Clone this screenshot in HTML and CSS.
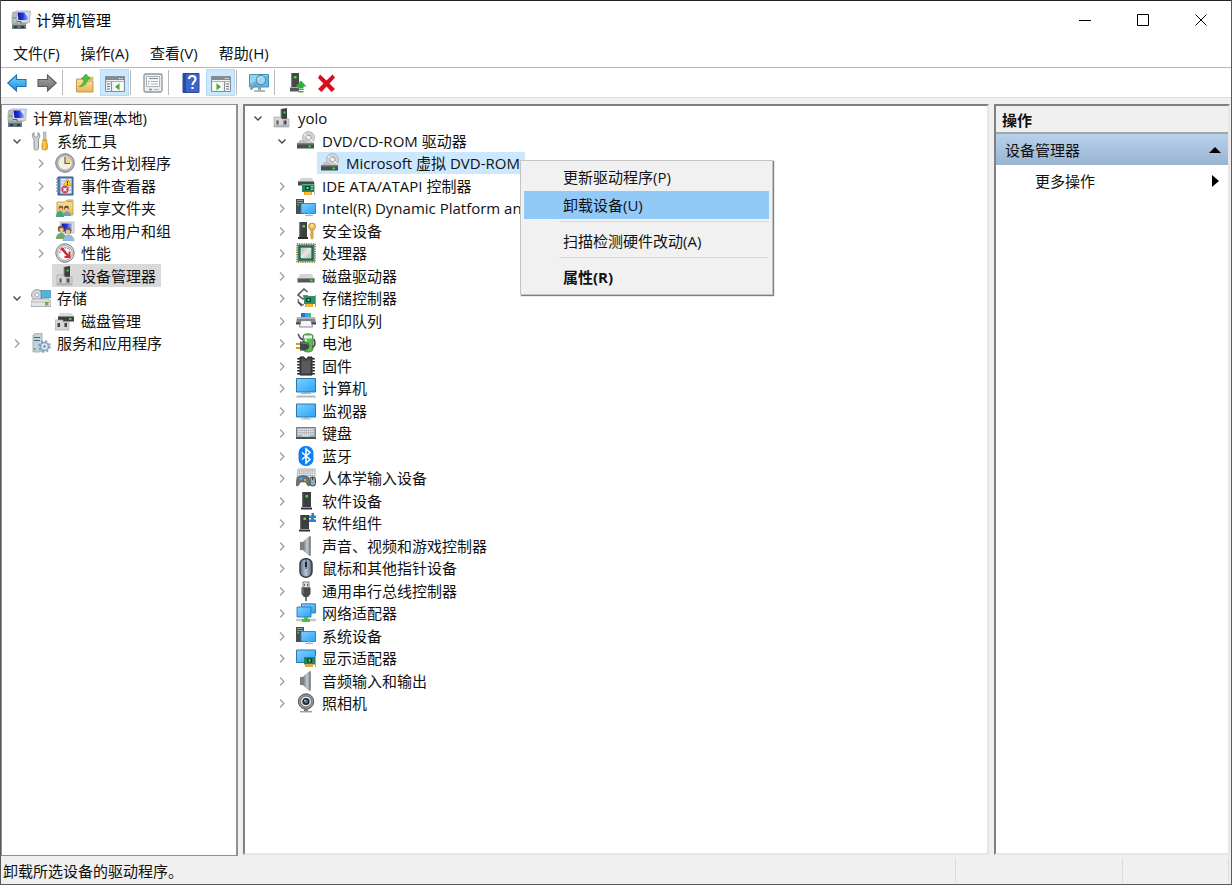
FILE: index.html
```html
<!DOCTYPE html>
<html lang="zh-CN">
<head>
  <meta charset="UTF-8">
  <meta name="viewport" content="width=device-width, initial-scale=1.0">
  <title>计算机管理</title>
  <link rel="stylesheet" href="styles.css">
</head>
<body>
  <!-- Icon sprite -->
  <svg class="sprite" aria-hidden="true">
    <defs>
      <linearGradient id="g-screen" x1="0" y1="0" x2="1" y2="1"><stop offset="0" stop-color="#7fd0ff"/><stop offset="1" stop-color="#2ba4f8"/></linearGradient>
      <linearGradient id="g-blue" x1="0" y1="0" x2="1" y2="0"><stop offset="0" stop-color="#0a16a8"/><stop offset=".5" stop-color="#2138e0"/><stop offset="1" stop-color="#a9c4ff"/></linearGradient>
      <linearGradient id="g-metal" x1="0" y1="0" x2="1" y2="1"><stop offset="0" stop-color="#b4b4b4"/><stop offset=".5" stop-color="#e8e8e8"/><stop offset="1" stop-color="#b2b2b2"/></linearGradient>
      <linearGradient id="g-back" x1="0" y1="0" x2="0" y2="1"><stop offset="0" stop-color="#7cd0fa"/><stop offset="1" stop-color="#1590e0"/></linearGradient>
      <linearGradient id="g-fwd" x1="0" y1="0" x2="0" y2="1"><stop offset="0" stop-color="#a5a5a5"/><stop offset="1" stop-color="#6c6c6c"/></linearGradient>
      <linearGradient id="g-folder" x1="0" y1="0" x2="0" y2="1"><stop offset="0" stop-color="#fbe3a0"/><stop offset="1" stop-color="#e5b755"/></linearGradient>
      <linearGradient id="g-speaker" x1="0" y1="0" x2="1" y2="0"><stop offset="0" stop-color="#6d737a"/><stop offset=".6" stop-color="#c9ced3"/><stop offset="1" stop-color="#777d84"/></linearGradient>
      <linearGradient id="g-mouse" x1="0" y1="0" x2="1" y2="0"><stop offset="0" stop-color="#5d6f85"/><stop offset=".5" stop-color="#b8c7d8"/><stop offset="1" stop-color="#53647a"/></linearGradient>
    </defs>

    <symbol id="open" viewBox="0 0 20 20"><path d="M6.500 8.500l3.500 3.500 3.500-3.500" fill="none" stroke="#484848" stroke-width="1.400"/></symbol>
    <symbol id="closed" viewBox="0 0 20 20"><path d="M8 6.500l4 4-4 4" fill="none" stroke="#a0a0a0" stroke-width="1.300"/></symbol>

    <symbol id="computer-mgmt" viewBox="0 0 20 20">
      <path d="M2 2h4v11H1V6z" fill="#b9bec4" stroke="#8b9096" stroke-width=".6"/><path d="M2 8h3" stroke="#3fae49" stroke-width="1.200"/>
      <path d="M5 1h14.500l-1 11.500H6z" fill="#d8dade" stroke="#a4a8ae" stroke-width=".7"/><path d="M6.500 2.500H17.500l-.5 7.500H7.500z" fill="url(#g-blue)"/><path d="M13 2.500h4v4.500z" fill="#dbe7ff"/>
      <path d="M11 12h5l1 2H10z" fill="#c0c3c8"/>
      <path d="M1 13.500h14v5.500H1z" fill="#68747c"/><path d="M1 13.500h14v1.500H1z" fill="#98a2a8"/><path d="M3 16h3v2H3zM10 16h3v2h-3z" fill="#303a40"/><path d="M6 11.500h4v2" fill="none" stroke="#5a646a"/>
    </symbol>
    <symbol id="tools" viewBox="0 0 20 20">
      <path d="M3 1.500v3.500l2 1.500 2-1.500V1.500c2 1 2.500 4.500.5 6.500v9.500c0 2-4.500 2-4.500 0V8C.5 6 1 2.500 3 1.500z" fill="#d0d2d4" stroke="#7c7f82" stroke-width=".8"/>
      <path d="M12.500 1h2.500v8h-2.500z" fill="#c4c7ca" stroke="#85888b" stroke-width=".5"/><path d="M11.500 9h4.500l-.5 2 1 2v4.500c0 2-5.500 2-5.500 0V13l1-2z" fill="#f4b32c" stroke="#ba7d0c" stroke-width=".6"/><path d="M13 10v8" stroke="#ffe08a"/>
    </symbol>
    <symbol id="clock" viewBox="0 0 20 20">
      <circle cx="10" cy="10" r="9.300" fill="#b7bcc2" stroke="#747b82" stroke-width="1"/><circle cx="10" cy="10" r="7.200" fill="#f5efe0" stroke="#8f959b" stroke-width=".7"/>
      <path d="M10 10V3a7 7 0 0 1 7 7z" fill="#efd193"/><path d="M10 4v6.500h5" fill="none" stroke="#52606c" stroke-width="1.200"/>
    </symbol>
    <symbol id="events" viewBox="0 0 20 20">
      <path d="M3 1h15v18H3z" fill="#557bb6" stroke="#37568a"/><path d="M5.500 2.500h11v15h-11z" fill="#e4ebf5"/><path d="M6 5h10M6 8h10M6 11h10M6 14h10" stroke="#8fa6ca" stroke-width=".7"/>
      <path d="M1 3h4M1 6h4M1 9h4M1 12h4M1 15h4" stroke="#67809f" stroke-width="1"/>
      <path d="M12.500 2.500l4 7h-8z" fill="#fbd429" stroke="#b78d08" stroke-width=".6"/><path d="M12.500 5v2.500M12.500 8v1" stroke="#333"/>
      <circle cx="10" cy="13.500" r="3.700" fill="#dc4050"/><path d="M8.500 12l3 3m0-3l-3 3" stroke="#fff" stroke-width="1.100"/>
    </symbol>
    <symbol id="shared" viewBox="0 0 20 20">
      <path d="M2 4h8l2-2h6v15H2z" fill="url(#g-folder)" stroke="#c79634" stroke-width=".8"/><path d="M12 3.500h5" stroke="#69b7e8" stroke-width="1.500"/>
      <circle cx="6" cy="10" r="2.300" fill="#6e5338"/><circle cx="11.500" cy="10" r="2.300" fill="#4a3a2b"/><circle cx="6" cy="11" r="1.500" fill="#f0c49b"/><circle cx="11.500" cy="11" r="1.500" fill="#f0c49b"/>
      <path d="M1 19c0-8 8-8 8 0z" fill="#45a874"/><path d="M8 18c0-6 8-6 8 0z" fill="#6b9fc0"/>
    </symbol>
    <symbol id="users" viewBox="0 0 20 20">
      <path d="M5 1h14v11H6z" fill="#dfe2e6" stroke="#a5a9af" stroke-width=".7"/><path d="M6.500 2.500H17v8H7.500z" fill="url(#g-blue)"/>
      <circle cx="6" cy="8" r="3.200" fill="#6f533b"/><circle cx="6.500" cy="9" r="2.200" fill="#e9bc91"/><path d="M1 18c0-8 10-8 10 0z" fill="#73a56c"/>
      <circle cx="13" cy="10" r="3.300" fill="#845730"/><circle cx="13" cy="11" r="2.300" fill="#edc49c"/><path d="M8 20c0-8 11-8 11 0z" fill="#92bddd" stroke="#6c9cbf" stroke-width=".5"/>
    </symbol>
    <symbol id="gauge" viewBox="0 0 20 20">
      <circle cx="10" cy="10" r="9.200" fill="#d9d9d9" stroke="#777" stroke-width="1"/><circle cx="10" cy="10" r="7.200" fill="#fff" stroke="#999" stroke-width=".8"/>
      <path d="M5 10a5.500 5.500 0 0 1 10-3" fill="none" stroke="#8b8b8b" stroke-width="1.500" stroke-dasharray="1.500 1"/><path d="M6 5l7.500 8.500M9.500 14h5V8.500" fill="none" stroke="#e0202a" stroke-width="2"/><path d="M8 5l5 7" stroke="#5c2428" stroke-width=".7"/>
    </symbol>
    <symbol id="device" viewBox="0 0 20 20">
      <path d="M9 1l6-1v11H9z" fill="#3c3d3f"/><path d="M8.500 1h1v10h-1z" fill="#8f9193"/><path d="M11.500 3.500h2v2h-2z" fill="#42e03e"/>
      <path d="M2 9h6l2 2h7v8H2z" fill="#d4d5d6" stroke="#9a9c9e" stroke-width=".6"/><path d="M2 17h15v2H2z" fill="#b0b2b4"/><path d="M4.500 12.500h2v4h-2zM11.500 12.500h3v4h-3z" fill="#3d3f41"/><path d="M5.500 13v3M12.500 13v3" stroke="#898b8d" stroke-width=".6"/>
    </symbol>
    <symbol id="storage" viewBox="0 0 20 20">
      <path d="M3 2h8v9H3z" fill="#9da1a6"/><circle cx="6" cy="7" r="5.500" fill="#d2d5d8" stroke="#84888c" stroke-width=".7"/><circle cx="6" cy="7" r="1.800" fill="#fff" stroke="#8b9094" stroke-width=".6"/>
      <path d="M10 2.500h9.500V10H10z" fill="#4fb5de" stroke="#347fa5" stroke-width=".6"/><path d="M3 11h14l3 2v5.500H0V13z" fill="#e4e5e7" stroke="#929497" stroke-width=".7"/><path d="M1 14h18" stroke="#b5b7ba"/><path d="M14 14h3.500v3.500H14z" fill="#5cb947"/>
    </symbol>
    <symbol id="disk-mgmt" viewBox="0 0 20 20">
      <path d="M5 2h12l2 4H3z" fill="#d9dadb"/><path d="M3 5.500h16v5H3z" fill="#3b3d3f"/><path d="M14 7h2.500v1.800H14z" fill="#3ce13b"/>
      <path d="M0 9h8v2h6v8H0z" fill="#d5d6d7" stroke="#9c9ea0" stroke-width=".6"/><path d="M2.500 12h2.500v4H2.500zM9.500 12H12v4H9.500z" fill="#3e4042"/>
    </symbol>
    <symbol id="services" viewBox="0 0 20 20">
      <path d="M2 2l3-2h6v18l-2 1H2z" fill="#c4d2d9" stroke="#8699a3" stroke-width=".7"/><path d="M3 4.500h6M3 7.500h6" stroke="#4e6470" stroke-width="1"/><path d="M3 16h2" stroke="#3cb64c" stroke-width="1.500"/>
      <circle cx="13.500" cy="13.500" r="4" fill="#dbe8f2" stroke="#7ba0bd" stroke-width="1.500"/><circle cx="13.500" cy="13.500" r="5.500" fill="none" stroke="#7ba0bd" stroke-width="1.600" stroke-dasharray="2.200 2.120"/><circle cx="13.500" cy="13.500" r="1.300" fill="#6590b4"/>
    </symbol>

    <symbol id="optical" viewBox="0 0 20 20">
      <circle cx="12.500" cy="6.500" r="6" fill="#d4d5d6" stroke="#a3a4a5" stroke-width=".7"/><circle cx="12.500" cy="6.500" r="2.500" fill="#f5f5f5" stroke="#979899" stroke-width="1"/><path d="M8 3l3 2.500M14 8l3 3" stroke="#fff"/>
      <path d="M4 9h5c2 3 5 3 8 2l1 2H1z" fill="#bfc0c2"/><path d="M1 12.500h17v5H1z" fill="#4a4c4e"/><path d="M1 12.500h17v1H1z" fill="#78797b"/><path d="M12.500 14.500h2.500v1.800h-2.500z" fill="#3be13b"/>
    </symbol>
    <symbol id="ide" viewBox="0 0 20 20">
      <path d="M5 2h11l2 4H2z" fill="#d3d4d5"/><path d="M2 5.500h16v4H2z" fill="#47494b"/><path d="M6 8h12v8H6z" fill="#25865b"/><path d="M6 8h12v1H6z" fill="#54b486"/><path d="M9 10h5v4H9z" fill="#10412e"/><path d="M10.500 11h2v2h-2z" fill="#7ddda8"/><path d="M15 10.500h2M15 13h2" stroke="#a8e0c4"/><path d="M8 16h8v3H8z" fill="#f3a51c"/><path d="M10 16v3M12 16v3M14 16v3" stroke="#ffdb6b" stroke-width=".8"/><path d="M18.500 7v12" stroke="#bbb"/>
    </symbol>
    <symbol id="system" viewBox="0 0 20 20">
      <path d="M0 1h8v15H0z" fill="#4a4d50"/><path d="M1 2.500h6M1 4.500h6" stroke="#96999c"/><path d="M1.500 6h1.500v1.500H1.500z" fill="#41dc40"/><path d="M5 5.500h14.500v10H5z" fill="url(#g-screen)" stroke="#2f7fae" stroke-width=".9"/><path d="M9 17.500h8" stroke="#9bb4c5" stroke-width="1.200"/><path d="M12 15.500h2v2h-2z" fill="#b9cad6"/>
    </symbol>
    <symbol id="security" viewBox="0 0 20 20">
      <path d="M3 1h8v15H3z" fill="#3d3f41"/><path d="M3 1h1.300v15H3z" fill="#77797b"/><path d="M6.500 4H9v2.500H6.500z" fill="#43e33e"/><path d="M2 16h10v2H2z" fill="#2a2c2e"/><circle cx="16" cy="5.500" r="3.500" fill="#edc269" stroke="#b8862a" stroke-width=".8"/><circle cx="16" cy="4.500" r="1" fill="#fff"/><path d="M14.800 8.500h2.500V17L16 18.500 14.800 17v-2l-1-1 1-1z" fill="#e1ac45" stroke="#b8862a" stroke-width=".4"/>
    </symbol>
    <symbol id="cpu" viewBox="0 0 20 20">
      <path d="M.8.800h18.400v18.400H.8z" fill="none" stroke="#a58a3b" stroke-width="1.500" stroke-dasharray="1.200 1.100"/><path d="M1.500 1.500h17v17h-17z" fill="#2a6b50"/><path d="M2.500 2.500h15v15h-15z" fill="none" stroke="#3f8166"/><path d="M5 5h10v10H5z" fill="url(#g-metal)" stroke="#e9e9e9" stroke-width=".6"/>
    </symbol>
    <symbol id="disk" viewBox="0 0 20 20">
      <path d="M4 8h12l2 4.500H2z" fill="#d4d5d6"/><path d="M1.500 12h17v4.500h-17z" fill="#55575a"/><path d="M1.500 12h17v1h-17z" fill="#8c8e90"/><path d="M14 13.500h2.500v1.800H14z" fill="#3ee33c"/>
    </symbol>
    <symbol id="storage-ctrl" viewBox="0 0 20 20">
      <path d="M11.500 4L8 1 2 7l5 4 3.500-3H7" fill="none" stroke="#555a5e" stroke-width="1.600"/><path d="M2 11c0 4 2 5 6 6" fill="none" stroke="#777c80" stroke-width="1.400"/><path d="M8 8h11v8H8z" fill="#2e9167"/><path d="M10 10h5v4h-5z" fill="#12442f"/><path d="M11.500 11h2v2h-2z" fill="#79d5a4"/><path d="M9 16h8v3H9z" fill="#f2a41c"/><path d="M11 16v3M13 16v3M15 16v3" stroke="#ffdc6b" stroke-width=".8"/><path d="M19.500 7v12" stroke="#999"/><path d="M2 14l4 4" stroke="#3f4447" stroke-width="1.500"/>
    </symbol>
    <symbol id="printer" viewBox="0 0 20 20">
      <path d="M5 2h10v5H5z" fill="#3aa4ea"/><path d="M5 2h4v5H5z" fill="#2471cf"/><path d="M13 2h2v5h-2z" fill="#56bd51"/><path d="M1 6h18l1 7H0z" fill="#7f858b"/><path d="M1 6h18v2H1z" fill="#aeb4b9"/><path d="M0 11.500h20v2H0z" fill="#3f464c"/><path d="M5 9.500h10l1.500 6.500h-13z" fill="#f3f5f6" stroke="#69727a" stroke-width=".8"/>
    </symbol>
    <symbol id="battery" viewBox="0 0 20 20">
      <path d="M7 3c0-3 10-3 10 0v13c0 4-10 4-10 0z" fill="#55bd4b" stroke="#55605a" stroke-width=".8"/><path d="M8 2.500h8v3H8z" fill="#edf1f3"/><path d="M10 6v10" stroke="#b5f0aa" stroke-width="2"/>
      <path d="M2 1c2 2 1 6 5 5M16 14c4 0 3-6 2-8" fill="none" stroke="#444b50" stroke-width="1.600"/><path d="M0 11h5M0 15h5" stroke="#d99820" stroke-width="1.800"/><path d="M4 8.500h4c7 0 7 9 0 9H4z" fill="#40464a"/><path d="M5 10h3c3 0 4 1.500 4 2" fill="none" stroke="#858c91"/>
    </symbol>
    <symbol id="firmware" viewBox="0 0 20 20">
      <path d="M4 1h4l1 2h2l1-2h4v18H4z" fill="#4a4b4c" stroke="#202122"/><path d="M2.500 2v17M17.500 2v17" stroke="#191a1b" stroke-width="2.500" stroke-dasharray="1.600 1.400"/><path d="M6 5h8v12H6z" fill="#5a5b5c"/>
    </symbol>
    <symbol id="pc" viewBox="0 0 20 20">
      <path d="M.5.500h19V14H.5z" fill="url(#g-screen)" stroke="#2c79a8"/><path d="M8 14h4v1.500H8z" fill="#8aa7b9"/><path d="M5 15.500h10" stroke="#9ab3c3"/><path d="M1 17.500h18l1 2H0z" fill="#a7bac8"/>
    </symbol>
    <symbol id="monitor" viewBox="0 0 20 20">
      <path d="M.5 3h19v13H.5z" fill="url(#g-screen)" stroke="#2c79a8"/><path d="M8 16h4v1.500H8z" fill="#8aa7b9"/><path d="M5 18h10" stroke="#9ab3c3"/>
    </symbol>
    <symbol id="keyboard" viewBox="0 0 20 20">
      <path d="M.5 4.500h19v10H.5z" fill="#a7adb3" stroke="#777d83"/><path d="M0 14h20v2H0z" fill="#4a4f54"/><path d="M2 6.500h16M2 8.700h16M2 11h16" stroke="#eef1f3" stroke-width="1.300" stroke-dasharray="1.500 .7"/><path d="M6 12.800h8" stroke="#eef1f3"/>
    </symbol>
    <symbol id="bluetooth" viewBox="0 0 20 20">
      <rect x="2.500" y="0" width="15" height="20" rx="7" fill="#0a82f5"/><path d="M6 6.500l8 7-4 3.500V3l4 3.500-8 7" fill="none" stroke="#fff" stroke-width="1.500"/>
    </symbol>
    <symbol id="hid" viewBox="0 0 20 20">
      <path d="M2 1h17v9H1z" fill="#e1e4e6" stroke="#9ba0a4" stroke-width=".8"/><path d="M3 3h14M3 5.200h14M3 7.500h14" stroke="#8c9297" stroke-dasharray="1.300 .8"/><path d="M1 10c2-3 10-3 12 0l1 7c-1 2-3 1-4-3H4c-1 4-3 5-4 3z" fill="#69737c" stroke="#3f484f" stroke-width=".6"/><circle cx="5" cy="10.500" r="1.500" fill="#34a9ef"/><circle cx="9" cy="12" r="1" fill="#f0c940"/><rect x="14" y="9" width="5.500" height="9" rx="2.500" fill="#9aa9b5" stroke="#3d464d"/><path d="M16.700 9v3" stroke="#333"/>
    </symbol>
    <symbol id="software" viewBox="0 0 20 20">
      <path d="M6 1h9v15H6z" fill="#3b3d3f"/><path d="M6 1h1.200v15H6z" fill="#67696b"/><path d="M9.500 4H12v2.500H9.500z" fill="#42e43d"/><path d="M5 16.500h11v2H5z" fill="#303234"/>
    </symbol>
    <symbol id="component" viewBox="0 0 20 20">
      <path d="M4 2h9v14H4z" fill="#3b3d3f"/><path d="M4 2h1.200v14H4z" fill="#67696b"/><path d="M7.500 4.500H10V7H7.500z" fill="#42e43d"/><path d="M3 16.500h11v2H3z" fill="#303234"/><path d="M13 2.500h2.500V0H18v2.500h2V5h-2v1.500h2V9h-7V6.500h2V5h-2z" fill="#2b82cc"/>
    </symbol>
    <symbol id="speaker" viewBox="0 0 20 20">
      <path d="M4 6h4v8H4z" fill="#787e84"/><path d="M7 6l7-6v20l-7-6z" fill="url(#g-speaker)" stroke="#858b90" stroke-width=".5"/><path d="M14.500.500v19" stroke="#8f959a" stroke-width="1"/>
    </symbol>
    <symbol id="mouse" viewBox="0 0 20 20">
      <rect x="4" y=".7" width="12" height="18.500" rx="5.500" fill="url(#g-mouse)" stroke="#303740" stroke-width="1.400"/><path d="M10 1v10" stroke="#354150" stroke-width="1"/><path d="M10 4v5" stroke="#23272d" stroke-width="2.200"/>
    </symbol>
    <symbol id="usb" viewBox="0 0 20 20">
      <path d="M7 1h6v6H7z" fill="#dedfe0" stroke="#7b7d7e"/><path d="M8.500 3v2M11.500 3v2" stroke="#686a6b"/><path d="M5.500 6.500h9V13l-2.500 3H8l-2.500-3z" fill="#47494a"/><path d="M7 7.500V13" stroke="#868889"/><path d="M10 16v4" stroke="#777" stroke-width="2"/>
    </symbol>
    <symbol id="network" viewBox="0 0 20 20">
      <path d="M5.500.800h14V10h-14z" fill="url(#g-screen)" stroke="#2c79a8" stroke-width=".9"/><path d="M1 4h14v10H1z" fill="url(#g-screen)" stroke="#2c79a8" stroke-width=".9"/><path d="M0 17h20" stroke="#c3c9c5" stroke-width="2.500"/><path d="M8 14h4v2h2v3H6v-3h2z" fill="#48bf45"/>
    </symbol>
    <symbol id="display" viewBox="0 0 20 20">
      <path d="M.5 2h19v12.500H.5z" fill="url(#g-screen)" stroke="#2c79a8"/><path d="M8 9h11v7.500H8z" fill="#258459"/><path d="M11 10.500h5v4h-5z" fill="#10402c"/><path d="M12.500 11.500h2v2h-2z" fill="#7cd9a8"/><path d="M9 16.500h8v2.500H9z" fill="#f3a51c"/><path d="M19.500 8v11" stroke="#a4a6a8"/>
    </symbol>
    <symbol id="camera" viewBox="0 0 20 20">
      <circle cx="10" cy="8.500" r="7.700" fill="#93989d" stroke="#53585d"/><circle cx="10" cy="8.500" r="5.500" fill="#e4e7e9" stroke="#6b7176"/><circle cx="10" cy="8.500" r="3.600" fill="#25292e"/><circle cx="10" cy="8.500" r="1.800" fill="#52799d"/><circle cx="9" cy="7.500" r=".7" fill="#fff"/><path d="M8 16h4v2H8z" fill="#777c80"/><path d="M4 18.700h12" stroke="#9b9fa2" stroke-width="1.500"/>
    </symbol>

    <symbol id="back" viewBox="0 0 20 20"><path d="M.8 10L9.500 2v4.500H19v7H9.500V18z" fill="url(#g-back)" stroke="#1c74b3" stroke-width="1.100"/></symbol>
    <symbol id="forward" viewBox="0 0 20 20"><path d="M19.200 10L10.500 2v4.500H1v7h9.500V18z" fill="url(#g-fwd)" stroke="#5b5b5b" stroke-width="1.100"/></symbol>
    <symbol id="up" viewBox="0 0 20 20"><path d="M1.500 6h6l2 2h8.500v11H1.500z" fill="url(#g-folder)" stroke="#bd9140" stroke-width=".9"/><path d="M12 4h6v3h-6z" fill="#f2cb78" stroke="#bd9140" stroke-width=".5"/><path d="M4 13.500c3-1 5-4 5-7.500H6l5-5 4.500 5h-3c0 5-4 8-8.500 7.500z" fill="#54bf3d" stroke="#328a25" stroke-width=".5"/></symbol>
    <symbol id="tree-toggle" viewBox="0 0 20 20"><path d="M.5 3.500h19v15H.5z" fill="#eceff2" stroke="#868d94"/><path d="M1 4h18v3H1z" fill="#828a92"/><path d="M14 5.500h4" stroke="#fff" stroke-dasharray="1 .7"/><path d="M1 8.500h18" stroke="#aab0b5"/><path d="M6.500 9v9" stroke="#878e95"/><path d="M2 11h3M2 13.500h3M2 16h3" stroke="#727980"/><path d="M9 9.500h9v8H9z" fill="#fff"/><path d="M14.500 10v7.500L10 13.700z" fill="#45ad32"/></symbol>
    <symbol id="action-toggle" viewBox="0 0 20 20"><path d="M.5 3.500h19v15H.5z" fill="#eceff2" stroke="#868d94"/><path d="M1 4h18v3H1z" fill="#828a92"/><path d="M14 5.500h4" stroke="#fff" stroke-dasharray="1 .7"/><path d="M1 8.500h18" stroke="#aab0b5"/><path d="M13.500 9v9" stroke="#878e95"/><path d="M15 11h3M15 13.500h3M15 16h3" stroke="#727980"/><path d="M2 9.500h9v8H2z" fill="#fff"/><path d="M5.500 10v7.500l4.500-3.800z" fill="#45ad32"/></symbol>
    <symbol id="props" viewBox="0 0 20 20"><rect x="1" y="1" width="18" height="18" rx="1.500" fill="#eceef0" stroke="#91979d" stroke-width="1.300"/><path d="M3.500 3.500h13v10h-13z" fill="#fff" stroke="#adb2b7"/><path d="M6 5.500h9" stroke="#8b959e" stroke-width="1.300"/><path d="M5 8.500h1.500M5 11h1.500" stroke="#35a7df" stroke-width="1.200"/><path d="M8 8.500h7M8 11h7" stroke="#a8adb2"/><path d="M6 16.500h3" stroke="#32abdb" stroke-width="1.500"/><path d="M11 16.500h5" stroke="#b1b6bb"/></symbol>
    <symbol id="help" viewBox="0 0 20 20"><path d="M2 .5h16v19H2z" fill="#3e66c9" stroke="#284796"/><path d="M2 1h3v18H2z" fill="#294aa5"/><path d="M8 6c0-4 6.500-4 6.500 0 0 3-3 2.500-3 6M11.500 14v2" fill="none" stroke="#fff" stroke-width="2.200"/></symbol>
    <symbol id="scan" viewBox="0 0 20 20"><path d="M.5 1.500h19v12.500H.5z" fill="#60b8e8" stroke="#458fba"/><path d="M1 2h18L1 11z" fill="#97d4f4"/><path d="M9 14h3v3H9z" fill="#91a1ad"/><path d="M5 18h11" stroke="#91a1ad" stroke-width="1.500"/><circle cx="12" cy="7" r="4.700" fill="#b1e2fa" fill-opacity=".75" stroke="#668ca5" stroke-width="1.200"/><path d="M8 10.500L1.500 16.500" stroke="#7b9caf" stroke-width="2.300"/></symbol>
    <symbol id="update" viewBox="0 0 20 20"><path d="M4 0h8v14H4z" fill="#444648"/><path d="M4 0h1.200v14H4z" fill="#808284"/><path d="M7 3h2.500v2.500H7z" fill="#43e33e"/><path d="M3 14.500h9v4H3z" fill="#56585a"/><path d="M14 7.500l5.500 6h-3V15h-5v-1.500h-3z" fill="#2fae38"/><path d="M11.500 16.300h5M11.500 18.800h5" stroke="#2fae38" stroke-width="1.500"/></symbol>
    <symbol id="uninstall" viewBox="0 0 20 20"><path d="M3 1.500l6.500 6 6-6L18 4.500l-5.500 6 5.500 5.500-3.500 3-5-5.500L4.500 19 1 16l5.500-5.500L1 5z" fill="#d90d1b"/></symbol>
  </svg>

  <header class="titlebar">
    <svg class="icon"><use href="#computer-mgmt"/></svg>
    <h1 class="title">计算机管理</h1>
    <div class="window-controls">
      <button type="button" aria-label="最小化"><svg viewBox="0 0 12 12"><path d="M0 6.500h12"/></svg></button>
      <button type="button" aria-label="最大化"><svg viewBox="0 0 12 12"><path d="M.5.500h11v11H.5z"/></svg></button>
      <button type="button" aria-label="关闭"><svg viewBox="0 0 12 12"><path d="M.5.500l11 11M11.500.500l-11 11"/></svg></button>
    </div>
  </header>

  <nav class="menubar">
    <button type="button">文件(F)</button>
    <button type="button">操作(A)</button>
    <button type="button">查看(V)</button>
    <button type="button">帮助(H)</button>
  </nav>

  <div class="toolbar">
    <button type="button" aria-label="后退"><svg class="icon"><use href="#back"/></svg></button>
    <button type="button" aria-label="前进"><svg class="icon"><use href="#forward"/></svg></button>
    <span class="divider"></span>
    <button type="button" aria-label="向上"><svg class="icon"><use href="#up"/></svg></button>
    <button type="button" class="pressed" aria-label="控制台树"><svg class="icon"><use href="#tree-toggle"/></svg></button>
    <span class="divider"></span>
    <button type="button" aria-label="属性"><svg class="icon"><use href="#props"/></svg></button>
    <span class="divider"></span>
    <button type="button" aria-label="帮助"><svg class="icon"><use href="#help"/></svg></button>
    <button type="button" class="pressed" aria-label="操作窗格"><svg class="icon"><use href="#action-toggle"/></svg></button>
    <span class="divider"></span>
    <button type="button" aria-label="扫描"><svg class="icon"><use href="#scan"/></svg></button>
    <span class="divider"></span>
    <button type="button" aria-label="更新驱动程序"><svg class="icon"><use href="#update"/></svg></button>
    <button type="button" aria-label="卸载设备"><svg class="icon"><use href="#uninstall"/></svg></button>
  </div>

  <main class="panes">
    <aside class="pane console">
      <ul class="tree" id="consoleTree"></ul>
    </aside>
    <section class="pane devices">
      <ul class="tree" id="deviceTree"></ul>
    </section>
    <aside class="pane actions">
      <h2 class="actions-title">操作</h2>
      <button type="button" class="actions-group">设备管理器 <svg viewBox="0 0 12 6"><path d="M6 0l6 6H0z"/></svg></button>
      <button type="button" class="actions-item">更多操作 <svg viewBox="0 0 7 12"><path d="M0 0l7 6-7 6z"/></svg></button>
    </aside>
  </main>

  <footer class="statusbar">
    <span class="status-text">卸载所选设备的驱动程序。</span>
    <span class="status-cell"></span>
    <span class="status-cell small"></span>
  </footer>

  <!-- Context menu of the selected device -->
  <div class="context-menu">
    <button type="button">更新驱动程序(P)</button>
    <button type="button" class="active">卸载设备(U)</button>
    <hr>
    <button type="button">扫描检测硬件改动(A)</button>
    <hr>
    <button type="button" class="default">属性(R)</button>
  </div>

  <script src="script.js"></script>
</body>
</html>
```

FILE: styles.css
```css
:root {
  --face: #f0f0f0;
  --text-color: #111;
  --hot: #cce8ff;
  --icon-size: 20px;
}

* {
  box-sizing: border-box;
}

body {
  margin: 0;
  min-height: 100vh;
  display: flex;
  flex-direction: column;
  border: 1px solid #5a5a5a;
  border-top-color: #222;
  background: white;
  color: var(--text-color);
  font-family: "Open Sans", "Noto Sans CJK SC", sans-serif;
  font-size: 15px;
  line-height: 22px;
}

button {
  margin: 0;
  padding: 0;
  border: none;
  background: none;
  color: inherit;
  font: inherit;
}

.sprite {
  position: absolute;
  width: 0;
  height: 0;
}

.icon {
  display: block;
  flex: none;
  width: var(--icon-size);
  height: var(--icon-size);
}

/* Title bar */
.titlebar {
  display: flex;
  align-items: center;
  gap: 5px;
  height: 37px;
  padding: 0 1px 0 10px;
  color: black;
}

.title {
  margin: 0;
  font-size: 15px;
  font-weight: 400;
}

.window-controls {
  display: flex;
  height: 100%;
  margin-left: auto;
}

.window-controls button {
  width: 58px;
}

.window-controls svg {
  display: block;
  width: 12px;
  height: 12px;
  margin: 0 auto;
  fill: none;
  stroke: black;
}

/* Menu bar */
.menubar {
  display: flex;
  gap: 21px;
  height: 30px;
  padding: 0 12px;
  border-bottom: 1px solid #b4b9be;
}

/* Toolbar */
.toolbar {
  display: flex;
  gap: 1px;
  height: 30px;
  padding: 1px;
  border-bottom: 1px solid #dcdcdc;
}

.toolbar button {
  display: flex;
  align-items: center;
  justify-content: center;
  width: 29px;
}

.toolbar .pressed {
  background: var(--hot);
  border: 1px solid #b5dbf8;
}

.divider {
  width: 1px;
  margin: 1px 6px 1px 0;
  background: #b9b9b9;
}

/* Panes */
.panes {
  flex: 1;
  display: grid;
  grid-template-columns: 237px 1fr 236px;
  gap: 5px;
  padding: 6px 1px 0 0;
  background: var(--face);
}

.pane {
  min-width: 0;
  overflow: hidden;
  background: white;
}

.console {
  border: 1px solid #8a9098;
  border-width: 1px 2px 1px 1px;
}

.devices,
.actions {
  margin-bottom: 1px;
  border: 2px solid #808080;
  border-right-color: #e6e6e6;
  border-bottom-color: #e6e6e6;
}

/* Trees */
.tree {
  list-style: none;
  margin: 0;
  padding: 2px 0 0 2px;
}

.devices .tree {
  padding: 1px 0 0;
}

.row {
  display: flex;
  height: 22px;
  white-space: nowrap;
}

.row:nth-child(even) {
  height: 23px;
}

.level-1 {
  padding-left: 24px;
}

.level-2 {
  padding-left: 48px;
}

.level-3 {
  padding-left: 72px;
}

.toggle {
  width: 24px;
  padding-left: 3px;
}

.node {
  display: flex;
  align-items: center;
  gap: 6px;
  padding: 0 5px 0 3px;
}

.node.current {
  background: #d9d9d9;
}

.node.selected {
  background: var(--hot);
}

/* Actions pane */
.actions-title {
  margin: 0;
  height: 28px;
  padding: 3px 6px 0;
  border-bottom: 2px solid #a6a6a6;
  background: var(--face);
  font-size: 15px;
  line-height: 22px;
  font-weight: 700;
}

.actions button {
  display: flex;
  align-items: center;
  justify-content: space-between;
  width: 100%;
  height: 31px;
}

.actions svg {
  fill: black;
}

.actions .actions-group {
  padding: 0 7px 0 9px;
  background: linear-gradient(#b9d1ea, #99b4d1);
}

.actions-group svg {
  width: 12px;
  height: 6px;
}

.actions .actions-item {
  padding: 0 9px 0 39px;
}

.actions-item svg {
  width: 7px;
  height: 12px;
}

/* Status bar */
.statusbar {
  display: flex;
  height: 28px;
  padding: 2px;
  background: var(--face);
}

.status-text {
  flex: 1;
  padding-top: 2px;
}

.status-cell {
  width: 167px;
  border-left: 1px solid #dadada;
}

.status-cell.small {
  width: 107px;
  border-right: 1px solid #dadada;
}

/* Context menu */
.context-menu {
  position: absolute;
  left: 520px;
  top: 160px;
  width: 253px;
  padding: 2px 3px 3px;
  border: 1px solid #c4c4c4;
  background: #f1f1f1;
  box-shadow: 1px 1px 1px rgba(0, 0, 0, 0.5);
}

.context-menu button {
  display: block;
  width: 100%;
  height: 28px;
  padding-left: 39px;
  text-align: left;
}

.context-menu .active {
  background: #91c9f7;
}

.context-menu .default {
  font-weight: 700;
}

.context-menu hr {
  margin: 2px 0 5px 35px;
  border: none;
  border-top: 1px solid #dadada;
}
```

FILE: script.js
```js
// [level, icon, label, toggle state, highlight]
const consoleItems = [
  [0, 'computer-mgmt', '计算机管理(本地)', null],
  [0, 'tools', '系统工具', 'open'],
  [1, 'clock', '任务计划程序', 'closed'],
  [1, 'events', '事件查看器', 'closed'],
  [1, 'shared', '共享文件夹', 'closed'],
  [1, 'users', '本地用户和组', 'closed'],
  [1, 'gauge', '性能', 'closed'],
  [2, 'device', '设备管理器', null, 'current'],
  [0, 'storage', '存储', 'open'],
  [2, 'disk-mgmt', '磁盘管理', null],
  [0, 'services', '服务和应用程序', 'closed']
];

const deviceItems = [
  [0, 'device', 'yolo', 'open'],
  [1, 'optical', 'DVD/CD-ROM 驱动器', 'open'],
  [3, 'optical', 'Microsoft 虚拟 DVD-ROM', null, 'selected'],
  [1, 'ide', 'IDE ATA/ATAPI 控制器', 'closed'],
  [1, 'system', 'Intel(R) Dynamic Platform and', 'closed'],
  [1, 'security', '安全设备', 'closed'],
  [1, 'cpu', '处理器', 'closed'],
  [1, 'disk', '磁盘驱动器', 'closed'],
  [1, 'storage-ctrl', '存储控制器', 'closed'],
  [1, 'printer', '打印队列', 'closed'],
  [1, 'battery', '电池', 'closed'],
  [1, 'firmware', '固件', 'closed'],
  [1, 'pc', '计算机', 'closed'],
  [1, 'monitor', '监视器', 'closed'],
  [1, 'keyboard', '键盘', 'closed'],
  [1, 'bluetooth', '蓝牙', 'closed'],
  [1, 'hid', '人体学输入设备', 'closed'],
  [1, 'software', '软件设备', 'closed'],
  [1, 'component', '软件组件', 'closed'],
  [1, 'speaker', '声音、视频和游戏控制器', 'closed'],
  [1, 'mouse', '鼠标和其他指针设备', 'closed'],
  [1, 'usb', '通用串行总线控制器', 'closed'],
  [1, 'network', '网络适配器', 'closed'],
  [1, 'system', '系统设备', 'closed'],
  [1, 'display', '显示适配器', 'closed'],
  [1, 'speaker', '音频输入和输出', 'closed'],
  [1, 'camera', '照相机', 'closed']
];

function renderTree(id, items) {
  document.getElementById(id).innerHTML = items.map(([level, icon, label, state, mark]) => {
    const toggle = state
      ? `<button type="button" class="toggle" aria-label="${label}"><svg class="icon"><use href="#${state}"/></svg></button>`
      : '';
    return `<li class="row level-${level}">${toggle}<span class="node ${mark || ''}"><svg class="icon"><use href="#${icon}"/></svg>${label}</span></li>`;
  }).join('');
}

renderTree('consoleTree', consoleItems);
renderTree('deviceTree', deviceItems);
```
